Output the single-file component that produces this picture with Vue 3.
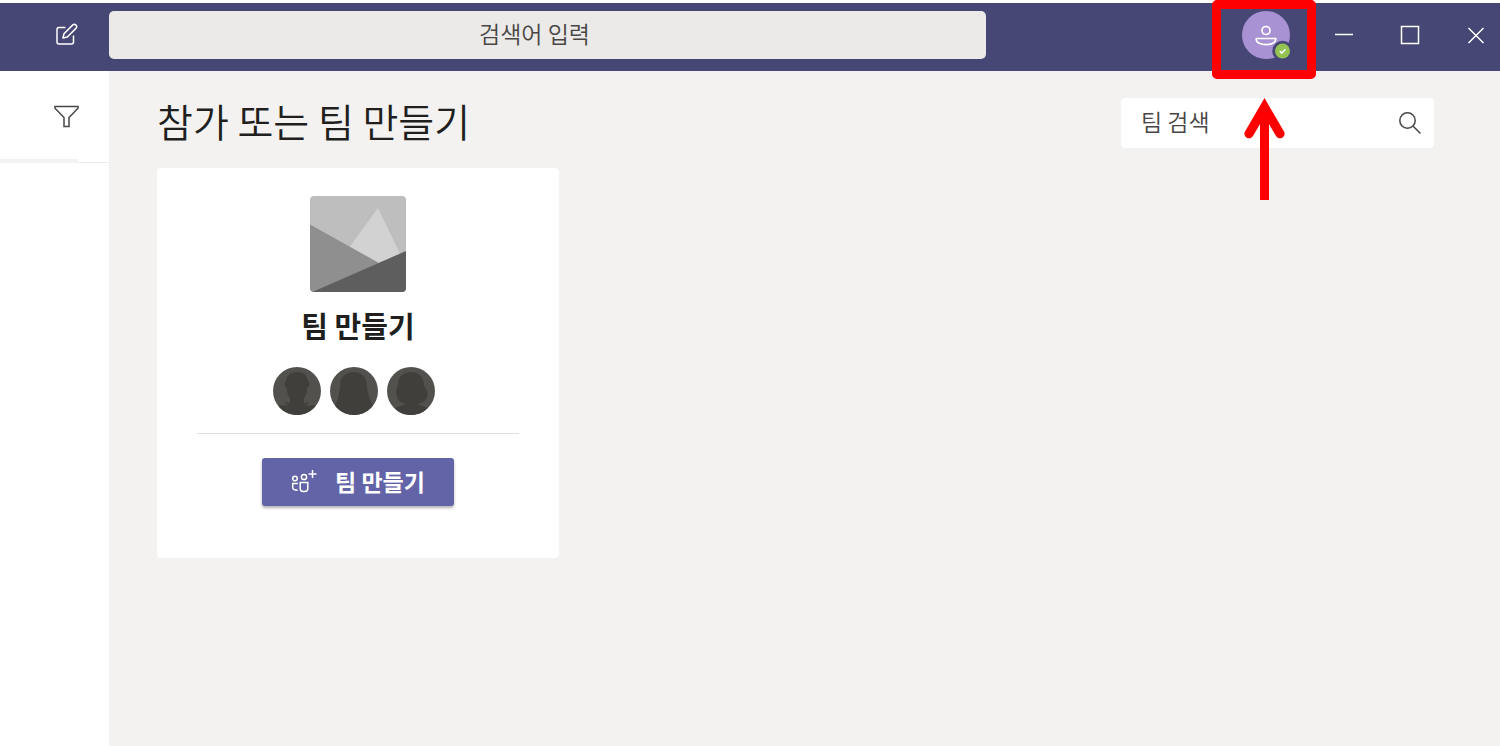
<script setup>
import { ref } from 'vue'

const search = ref('')
const teamSearch = ref('')
</script>


<template>
    <div class="app">
        <header class="topbar">
            <div class="compose">
                <button type="button" class="iconButton" aria-label="새 채팅">
                    <svg width="24" height="26" viewBox="0 0 24 26" fill="none" stroke="#fff" stroke-width="1.500">
                        <path d="M11.500 7.500H5a2 2 0 0 0-2 2V22a2 2 0 0 0 2 2H17.500a2 2 0 0 0 2-2V15.500" />
                        <path d="M9 18l1-4.300 8.600-8.600a2.300 2.300 0 0 1 3.300 3.300l-8.600 8.600z" stroke-linejoin="round" />
                    </svg>
                </button>
            </div>
            <input v-model="search" class="globalSearch" type="text" placeholder="검색어 입력" aria-label="검색어 입력">
            <div class="account">
                <button type="button" class="avatar" aria-label="프로필">
                    <svg width="48" height="48" viewBox="0 0 48 48" fill="none">
                        <circle cx="24" cy="24" r="24" fill="#a992d4" />
                        <circle cx="24" cy="19.500" r="4" stroke="#fff" stroke-width="1.700" />
                        <path d="M14.300 27.500h19.400v1c0 3.200-4.600 5.200-9.700 5.200s-9.700-2-9.700-5.200z" stroke="#fff" stroke-width="1.700" stroke-linejoin="round" />
                        <circle cx="40.500" cy="40" r="10.300" fill="#464775" />
                        <circle cx="40.500" cy="40" r="7.500" fill="#92c353" />
                        <path d="M37.800 40.100l2 2 3.700-3.900" stroke="#fff" stroke-width="1.500" />
                    </svg>
                </button>
                <div class="highlight"></div>
                <svg class="arrow" width="42" height="102" viewBox="0 0 42 102">
                    <path d="M21.500 0L41 33.500a4.500 4.500 0 0 1-8 4.500L26 26V102H17V26L10 38a4.500 4.500 0 0 1-8-4.500z" fill="#f00" />
                </svg>
            </div>
            <div class="windowButtons">
                <button type="button" aria-label="최소화">
                    <svg width="20" height="20" viewBox="0 0 20 20" stroke="#fff" stroke-width="1.500">
                        <path d="M1 9.500H19" />
                    </svg>
                </button>
                <button type="button" aria-label="최대화">
                    <svg width="20" height="20" viewBox="0 0 20 20" fill="none" stroke="#fff" stroke-width="1.500">
                        <rect x="1.500" y="1.500" width="17" height="17" />
                    </svg>
                </button>
                <button type="button" aria-label="닫기">
                    <svg width="20" height="20" viewBox="0 0 20 20" stroke="#fff" stroke-width="1.500">
                        <path d="M2.500 3l15 15M17.500 3l-15 15" />
                    </svg>
                </button>
            </div>
        </header>

        <div class="body">
            <aside class="sidebar">
                <div class="filterRow">
                    <button type="button" class="iconButton" aria-label="필터">
                        <svg width="26" height="24" viewBox="0 0 26 24" fill="none" stroke="#484644" stroke-width="1.500">
                            <path d="M1 1.500h23v1.700l-9 9.300v9h-5v-9l-9-9.300z" />
                        </svg>
                    </button>
                </div>
                <div class="divider">
                    <span class="thick"></span>
                    <span class="thin"></span>
                </div>
            </aside>

            <main class="content">
                <div class="titleRow">
                    <h1>참가 또는 팀 만들기</h1>
                    <label class="teamSearch">
                        <input v-model="teamSearch" type="text" placeholder="팀 검색" aria-label="팀 검색">
                        <svg width="24" height="24" viewBox="0 0 24 24" fill="none" stroke="#484644" stroke-width="1.500">
                            <circle cx="9.500" cy="9.500" r="7.700" />
                            <path d="M15 15l7.500 7.500" />
                        </svg>
                    </label>
                </div>

                <section class="card">
                    <svg class="picture" width="96" height="96" viewBox="0 0 96 96">
                        <rect width="96" height="96" fill="#bebebe" />
                        <path d="M68 12L92 62 68 72 36 56z" fill="#d2d2d2" />
                        <path d="M0 28.500L69 67 2 96H0z" fill="#8f8f8f" />
                        <path d="M96 55V96H2z" fill="#5e5e5e" />
                    </svg>
                    <h2>팀 만들기</h2>
                    <div class="people">
                        <svg width="48" height="48" viewBox="0 0 48 48">
                            <circle cx="24" cy="24" r="24" fill="#52514e" />
                            <path d="M24 5C17 5 13.500 9 13.500 13.500C10.500 15 11 20 14 21C14 26 15 29 17 31V36L12 35L15 38.500H5C9 44 16 48 24 48S39 44 43 38.500H33L36 35L31 36V31C33 29 34 26 34 21C37 20 37.500 15 34.500 13.500C34.500 9 31 5 24 5z" fill="#403f3c" />
                        </svg>
                        <svg width="48" height="48" viewBox="0 0 48 48">
                            <circle cx="24" cy="24" r="24" fill="#52514e" />
                            <path d="M24 5C16 5 10 10 10 18C9.500 27 8 33 5 38.500C9 44 16 48 24 48S39 44 43 38.500C40 33 37.500 27 37 18C36.500 10 31 5 24 5z" fill="#403f3c" />
                        </svg>
                        <svg width="48" height="48" viewBox="0 0 48 48">
                            <circle cx="24" cy="24" r="24" fill="#52514e" />
                            <path d="M24 5C16 5 11 10 11 18C8 23 9 31 12.500 34C14.500 36 17 36.500 18.500 37C18.500 38.500 13 38 8 41.500C12 46 18 48 24 48S36 46 40.500 41C36 38.500 31 38.500 31 37C33 36.500 36 35.500 38 33.500C41.500 30 41.500 23 37 19C37 10 32 5 24 5z" fill="#403f3c" />
                        </svg>
                    </div>
                    <hr>
                    <button type="button" class="createButton">
                        <svg width="26" height="24" viewBox="0 0 26 24" fill="none" stroke="#fff" stroke-width="1.500">
                            <circle cx="4" cy="8.500" r="2.300" />
                            <circle cx="13" cy="7" r="2.600" />
                            <path d="M7 13.500H1.700v4c0 1.800 1.500 2.700 5 2.700" />
                            <path d="M9.200 12.500h7.600v6a3 3 0 0 1-3 3h-1.600a3 3 0 0 1-3-3z" />
                            <path d="M21.500 0v8M17.500 4h8" />
                        </svg>
                        <span>팀 만들기</span>
                    </button>
                </section>
            </main>
        </div>
    </div>
</template>


<style>
body {
    margin: 0;
    background: white;
}
</style>

<style scoped>
.app {
    min-height: 100vh;
    box-sizing: border-box;
    padding-top: 3px;

    display: flex;
    flex-direction: column;
    font-family: "Noto Sans CJK KR", "Noto Sans", sans-serif;
    color: #201f1e;
}

button {
    padding: 0;
    border: none;
    background: none;
    font-family: inherit;
    cursor: pointer;
}

svg {
    display: block;
}

input {
    min-width: 0;
    box-sizing: border-box;
    border: none;
    outline: none;
    font-family: inherit;
    font-size: 23px;
    font-weight: 350;
    color: #484644;
}

input::placeholder {
    color: #484644;
    opacity: 1;
}

.topbar {
    height: 68px;
    box-sizing: border-box;
    padding-bottom: 4px;
    background: #464775;

    display: flex;
    align-items: center;
}

.compose {
    width: 109px;
    flex-shrink: 0;
    box-sizing: border-box;
    padding-left: 54px;
}

.globalSearch {
    flex: 1;
    height: 48px;
    padding: 0 26px 4px 0;
    border-radius: 5px;
    background: #ebeae8;
    text-align: center;
}

.account {
    position: relative;
    margin: 0 30px 0 256px;
}

.avatar {
    display: block;
    border-radius: 50%;
}

.highlight {
    position: absolute;
    top: -11px;
    left: -30px;
    width: 104px;
    height: 79px;
    box-sizing: border-box;
    border: 9px solid red;
    border-radius: 5px;
    pointer-events: none;
}

.arrow {
    position: absolute;
    top: 87px;
    left: 1px;
    pointer-events: none;
}

.windowButtons {
    display: flex;
    gap: 18px;
}

.windowButtons button {
    width: 48px;
    height: 48px;
    display: grid;
    place-items: center;
}

.body {
    flex: 1;
    display: flex;
}

.sidebar {
    width: 109px;
    flex-shrink: 0;
    background: white;
}

.filterRow {
    height: 88px;
    box-sizing: border-box;
    padding: 34px 0 0 54px;
}

.divider {
    display: flex;
    align-items: end;
}

.divider .thick {
    width: 78px;
    height: 4px;
    background: #f3f2f1;
}

.divider .thin {
    flex: 1;
    height: 1px;
    background: #edebe9;
}

.content {
    flex: 1;
    padding: 27px 66px 48px 48px;
    background: #f3f2f1;
}

.titleRow {
    display: flex;
    align-items: center;
    justify-content: space-between;
    margin-bottom: 20px;
}

h1 {
    margin: 0;
    font-size: 39px;
    line-height: 44px;
    padding-bottom: 6px;
    font-weight: 350;
}

.teamSearch {
    width: 313px;
    height: 50px;
    box-sizing: border-box;
    padding: 0 12px 0 20px;
    border-radius: 4px;
    background: white;

    display: flex;
    align-items: center;
}

.teamSearch input {
    flex: 1;
    padding: 0 0 4px;
    background: transparent;
}

.card {
    width: 402px;
    box-sizing: border-box;
    padding: 28px 40px 52px;
    border-radius: 4px;
    background: white;

    display: flex;
    flex-direction: column;
    align-items: center;
}

.picture {
    border-radius: 4px;
}

h2 {
    margin: 8px 0 17px;
    font-size: 29px;
    line-height: 50px;
    font-weight: 700;
}

.people {
    display: flex;
}

.people svg {
    margin-right: 9px;
}

hr {
    width: 100%;
    height: 1px;
    margin: 18px 0 24px;
    border: none;
    background: #e1dfdd;
}

.createButton {
    width: 192px;
    height: 48px;
    border-radius: 3px;
    background: #6264a7;
    box-shadow: 0 2px 3px rgba(0, 0, 0, .3);
    color: white;
    font-size: 23px;
    font-weight: 700;

    display: flex;
    align-items: center;
    justify-content: center;
    gap: 18px;
}

.createButton span {
    padding-bottom: 2px;
}
</style>
